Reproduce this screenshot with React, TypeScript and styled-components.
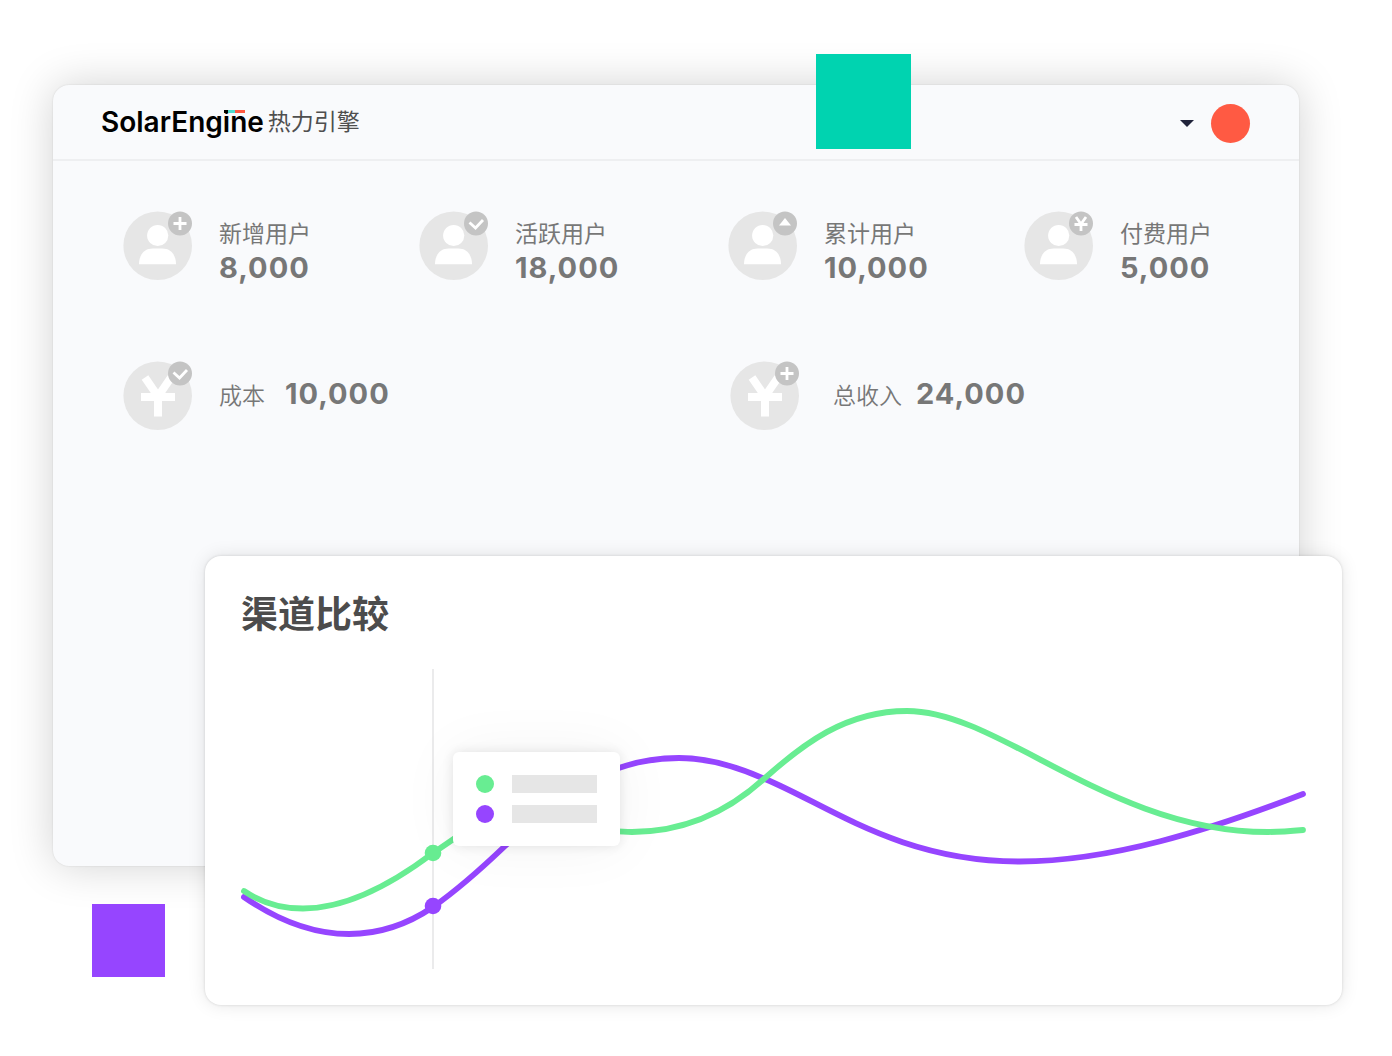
import React from "react";
import styled, { createGlobalStyle } from "styled-components";

const GlobalStyle = createGlobalStyle`
  *, *::before, *::after { box-sizing: border-box; }
  body {
    margin: 0;
    background: #fff;
    color: #777;
    font-family: Inter, "Noto Sans CJK SC", sans-serif;
  }
  h1, h2, dl, dt, dd, ul { margin: 0; padding: 0; }
`;

const Stage = styled.main`
  position: relative;
  padding: 85px 93px 50px 53px;
`;

const Square = styled.span<{ $color: string; $size: number }>`
  position: absolute;
  width: ${(p) => p.$size}px;
  height: ${(p) => p.$size}px;
  background: ${(p) => p.$color};
`;

const MintSquare = styled(Square)`
  top: 54px;
  left: 816px;
`;

const VioletSquare = styled(Square)`
  bottom: 78px;
  left: 92px;
`;

const Dashboard = styled.section`
  padding-bottom: 435px;
  border-radius: 16px;
  background: #f9fafc;
  box-shadow: 0 0 2px rgba(0, 0, 0, 0.12), 0 0 44px rgba(0, 0, 0, 0.18);
`;

const Header = styled.header`
  display: flex;
  align-items: center;
  justify-content: space-between;
  height: 76px;
  padding: 2px 49px 0 48px;
  border-bottom: 2px solid #eeeff1;
`;

const Brand = styled.h1`
  display: flex;
  align-items: center;
  gap: 4px;
  padding-bottom: 2px;
  font-weight: 400;
`;

const Wordmark = styled.span`
  color: #000;
  font: 600 28px/32px Inter, sans-serif;
`;

const MarkedLetter = styled.span`
  position: relative;
`;

const Accent = styled.span`
  position: absolute;
  top: 5px;
  left: 1px;
  width: 21px;
  height: 3px;
  background: linear-gradient(90deg, #000 4px, #4fdccd 4px 11px, #ff5a43 11px);
`;

const BrandName = styled.span`
  color: #4f4f4f;
  font-size: 23px;
  line-height: 32px;
`;

const Account = styled.button`
  display: flex;
  align-items: center;
  gap: 17px;
  padding: 0;
  border: 0;
  background: none;
`;

const Avatar = styled.span`
  width: 39px;
  height: 39px;
  border-radius: 50%;
  background: #ff5a43;
`;

const Stats = styled.div`
  display: flex;
  flex-direction: column;
  gap: 75px;
  padding: 50px 79px 0 70px;
`;

const UserStats = styled.dl`
  display: grid;
  grid-template-columns: 296fr 309fr 296fr 196fr;
`;

const MoneyStats = styled.dl`
  display: grid;
  grid-template-columns: 607fr 490fr;
`;

const Stat = styled.div`
  display: flex;
  gap: 26px;
`;

const MoneyStat = styled(Stat)<{ $gap: number }>`
  align-items: center;
  gap: ${(p) => p.$gap}px;
`;

const StatText = styled.div`
  padding-top: 7px;
`;

const InlineText = styled.div<{ $gap: number }>`
  display: flex;
  align-items: baseline;
  gap: ${(p) => p.$gap}px;
  padding-bottom: 4px;
`;

const Label = styled.dt`
  font-size: 23px;
  line-height: 32px;
`;

const LightLabel = styled(Label)`
  font-weight: 350;
`;

const Value = styled.dd`
  font-size: 29px;
  line-height: 36px;
  font-weight: 700;
  letter-spacing: 1px;
`;

const Report = styled.section`
  position: relative;
  margin: -310px -43px 0 152px;
  padding: 36px;
  border-radius: 16px;
  background: #fff;
  box-shadow: 0 0 3px rgba(0, 0, 0, 0.14), 0 0 18px rgba(0, 0, 0, 0.1);
`;

const ReportTitle = styled.h2`
  color: #4c4c4c;
  font-size: 37px;
  line-height: 46px;
  font-weight: 700;
`;

const Chart = styled.div`
  position: relative;
  margin-top: 31px;
`;

const Plot = styled.svg`
  display: block;
  width: 100%;
  height: auto;
`;

const Legend = styled.ul`
  position: absolute;
  top: 83px;
  left: 212px;
  display: flex;
  flex-direction: column;
  gap: 12px;
  padding: 23px;
  border-radius: 6px;
  background: #fff;
  list-style: none;
  box-shadow: 0 0 12px rgba(0, 0, 0, 0.1), 0 0 60px rgba(0, 0, 0, 0.05);
`;

const LegendRow = styled.li`
  display: flex;
  align-items: center;
  gap: 18px;
`;

const Dot = styled.span<{ $color: string }>`
  width: 18px;
  height: 18px;
  border-radius: 50%;
  background: ${(p) => p.$color};
`;

const Placeholder = styled.span`
  width: 85px;
  height: 18px;
  background: #e6e6e6;
`;

const BadgeMark = ({ kind }: { kind: string }) => {
  if (kind === "plus") return <path d="M50.500 12.500h13M57 6v13" stroke="#fff" strokeWidth="2.800" />;
  if (kind === "check") return <path d="M50.500 11.500l6 5.500 7.500-8" stroke="#fff" strokeWidth="2.800" fill="none" />;
  if (kind === "up") return <path d="M57 7l6 7.500H51z" fill="#fff" />;
  return <path d="M52 6l5 7 5-7M50.500 13.500h13M57 12.500v7.500" stroke="#fff" strokeWidth="2.800" fill="none" />;
};

const StatIcon = ({ kind, badge }: { kind: "user" | "yen"; badge: string }) => (
  <svg width="70" height="70" viewBox="0 0 70 70" fill="none" aria-hidden="true">
    <circle cx="34.700" cy="34.700" r="34.300" fill="#e6e6e6" />
    {kind === "user" ? (
      <g fill="#fff">
        <circle cx="34.700" cy="24.500" r="10.600" />
        <path d="M16 53.300C16 43.500 21.500 37.500 29.500 37.500H39.500C47.500 37.500 53 43.500 53 53.300Z" />
      </g>
    ) : (
      <path d="M22 16.500L35 35.500 48 16.500M18 36H52M35 33V55.500" stroke="#fff" strokeWidth="8" />
    )}
    <circle cx="57" cy="12.500" r="12" fill="#c4c4c4" />
    <BadgeMark kind={badge} />
  </svg>
);

const userStats = [
  { label: "新增用户", value: "8,000", badge: "plus" },
  { label: "活跃用户", value: "18,000", badge: "check" },
  { label: "累计用户", value: "10,000", badge: "up" },
  { label: "付费用户", value: "5,000", badge: "yen" },
];

const moneyStats = [
  { label: "成本", value: "10,000", badge: "check", gap: 26, textGap: 20 },
  { label: "总收入", value: "24,000", badge: "plus", gap: 33, textGap: 14 },
];

const GREEN = "#68ed92";
const VIOLET = "#9645ff";

export default function App() {
  return (
    <>
      <GlobalStyle />
      <Stage>
        <Dashboard>
          <Header>
            <Brand>
              <Wordmark>
                SolarEng
                <MarkedLetter>
                  i<Accent />
                </MarkedLetter>
                ne
              </Wordmark>
              <BrandName>热力引擎</BrandName>
            </Brand>
            <Account type="button" aria-label="账户">
              <svg width="14" height="7" viewBox="0 0 14 7" aria-hidden="true">
                <path d="M0 0H14L7 7Z" fill="#20233a" />
              </svg>
              <Avatar />
            </Account>
          </Header>
          <Stats>
            <UserStats>
              {userStats.map((s) => (
                <Stat key={s.label}>
                  <StatIcon kind="user" badge={s.badge} />
                  <StatText>
                    <Label>{s.label}</Label>
                    <Value>{s.value}</Value>
                  </StatText>
                </Stat>
              ))}
            </UserStats>
            <MoneyStats>
              {moneyStats.map((s) => (
                <MoneyStat key={s.label} $gap={s.gap}>
                  <StatIcon kind="yen" badge={s.badge} />
                  <InlineText $gap={s.textGap}>
                    <LightLabel>{s.label}</LightLabel>
                    <Value>{s.value}</Value>
                  </InlineText>
                </MoneyStat>
              ))}
            </MoneyStats>
          </Stats>
        </Dashboard>
        <Report>
          <ReportTitle>渠道比较</ReportTitle>
          <Chart>
            <Plot viewBox="241 669 1065 300" fill="none" aria-hidden="true">
              <path d="M433 669V969" stroke="#e4e5e6" strokeWidth="1.500" />
              <g strokeWidth="5.800" strokeLinecap="round">
                <path
                  stroke={VIOLET}
                  d="M244 897C280 922 315 934 349 934C379 934 408 924 433 907C460 888 482 868 505 846C549 805 600 758 679 758C710 758 740 768 765 779C830 806 900 861.500 1020 861.500C1110 861.500 1210 830 1303 794"
                />
                <path
                  stroke={GREEN}
                  d="M244 891C262 903 280 908.500 303 908.500C345 908.500 392 884 433 853L455 838C520 805 580 832 632 832C685 832 728 812 765 778C802 745 845 711 907 711C1000 711 1110 832 1268 832C1280 832 1292 831 1303 830"
                />
              </g>
              <circle cx="433" cy="853" r="8.300" fill={GREEN} />
              <circle cx="433" cy="906" r="8.300" fill={VIOLET} />
            </Plot>
            <Legend>
              {[GREEN, VIOLET].map((color) => (
                <LegendRow key={color}>
                  <Dot $color={color} />
                  <Placeholder />
                </LegendRow>
              ))}
            </Legend>
          </Chart>
        </Report>
        <MintSquare $color="#00d3b0" $size={95} />
        <VioletSquare $color={VIOLET} $size={73} />
      </Stage>
    </>
  );
}
